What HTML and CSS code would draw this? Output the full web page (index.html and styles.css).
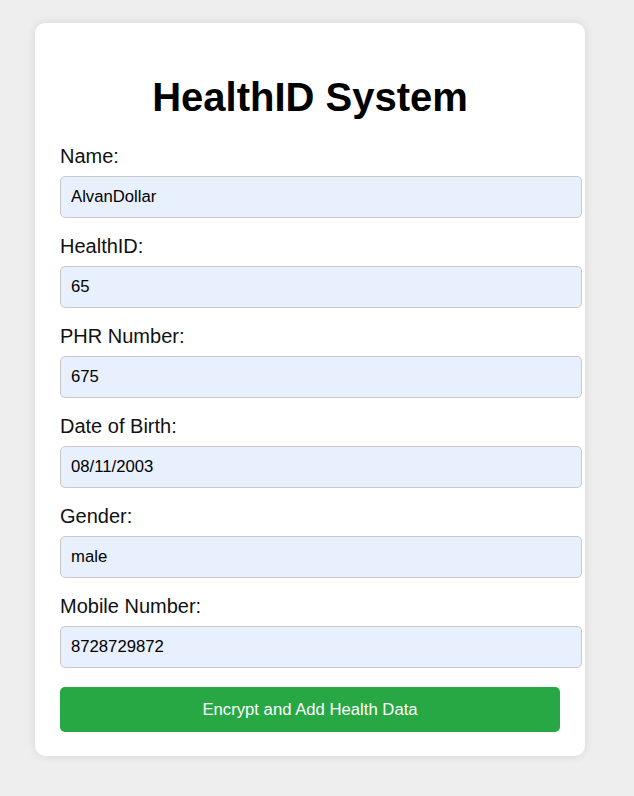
FILE: index.html
```html
<!DOCTYPE html>
<html>
<head>
<meta charset="utf-8">
<link rel="stylesheet" href="styles.css">
</head>
<body>
<div class="card">
  <h1 class="title">HealthID System</h1>
  <form class="form">
    <div class="group">
      <label class="label">Name:</label>
      <input class="field" type="text" value="AlvanDollar">
    </div>
    <div class="group">
      <label class="label">HealthID:</label>
      <input class="field" type="text" value="65">
    </div>
    <div class="group">
      <label class="label">PHR Number:</label>
      <input class="field" type="text" value="675">
    </div>
    <div class="group">
      <label class="label">Date of Birth:</label>
      <input class="field" type="text" value="08/11/2003">
    </div>
    <div class="group">
      <label class="label">Gender:</label>
      <input class="field" type="text" value="male">
    </div>
    <div class="group">
      <label class="label">Mobile Number:</label>
      <input class="field" type="text" value="8728729872">
    </div>
    <button class="submit" type="button">Encrypt and Add Health Data</button>
  </form>
</div>
</body>
</html>
```
FILE: styles.css
```css
html, body {
  margin: 0;
  padding: 0;
}
body {
  background: #eeeeee;
  font-family: "Liberation Sans", Arial, sans-serif;
  color: #000;
  padding: 23px 0 0 35px;
  min-height: 796px;
  box-sizing: border-box;
}
.card {
  width: 500px;
  background: #fff;
  border-radius: 10px;
  padding: 23px 25px 24px 25px;
  box-shadow: 0 0 10px rgba(0, 0, 0, 0.1);
}
.title {
  font-size: 40px;
  font-weight: bold;
  text-align: center;
  margin: 28px 0 25px 0;
  line-height: 46px;
}
.form {
  display: flex;
  flex-direction: column;
}
.group {
  display: flex;
  flex-direction: column;
  margin-bottom: 17px;
}
.label {
  display: block;
  font-size: 20px;
  line-height: 23px;
  margin-bottom: 8px;
  color: #111;
}
.field {
  width: 100%;
  height: 20px;
  padding: 10px 10px;
  box-sizing: content-box;
  margin: 0;
  border: 1px solid #c8c8c8;
  border-radius: 5px;
  background: #e8f0fe;
  font-family: "Liberation Sans", Arial, sans-serif;
  font-size: 16.7px;
  color: #000;
}
.group:last-of-type {
  margin-bottom: 19px;
}
.submit {
  width: 500px;
  height: 45px;
  margin-top: 0;
  border: none;
  border-radius: 5px;
  background: #28a745;
  color: #fff;
  font-family: "Liberation Sans", Arial, sans-serif;
  font-size: 16.7px;
  cursor: pointer;
}
```
